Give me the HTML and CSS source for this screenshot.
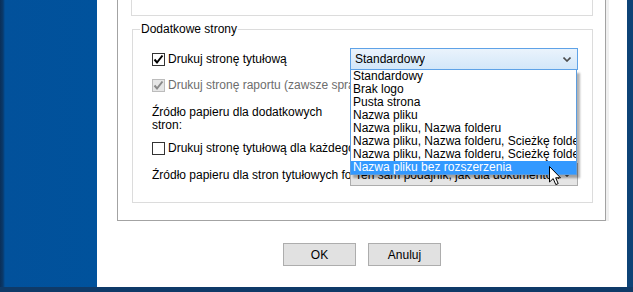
FILE: index.html
```html
<!DOCTYPE html>
<html lang="pl">
<head>
<meta charset="utf-8">
<title>Dodatkowe strony</title>
<link rel="stylesheet" href="styles.css">
</head>
<body>
<div class="screen">
  <div class="main">
    <div class="backdrop"></div>
    <div class="dialog">
      <div class="panel">
        <div class="upper-box"></div>
        <div class="groupbox">
          <div class="legend">Dodatkowe strony</div>
          <div class="row row1">
            <div class="cell">
              <span class="check checked"><svg viewBox="0 0 13 13" width="13" height="13"><path d="M2.5 6.5 L5 9.5 L10.5 2.5" fill="none" stroke="#000" stroke-width="2"/></svg></span>
              <span class="label">Drukuj stronę tytułową</span>
            </div>
            <div class="combo-wrap">
              <div class="combo combo-active">
                <span class="combo-text">Standardowy</span>
                <svg class="chev" viewBox="0 0 8 5" width="8" height="5"><path d="M0.5 0.5 L4 4 L7.5 0.5" fill="none" stroke="#4d4d4d" stroke-width="1.6"/></svg>
              </div>
              <ul class="dropdown">
                <li>Standardowy</li>
                <li>Brak logo</li>
                <li>Pusta strona</li>
                <li>Nazwa pliku</li>
                <li>Nazwa pliku, Nazwa folderu</li>
                <li>Nazwa pliku, Nazwa folderu, Ścieżkę folderu</li>
                <li>Nazwa pliku, Nazwa folderu, Ścieżkę folderu</li>
                <li class="selected">Nazwa pliku bez rozszerzenia</li>
              </ul>
            </div>
          </div>
          <div class="row row2">
            <div class="cell wide">
              <span class="check disabled"><svg viewBox="0 0 13 13" width="13" height="13"><path d="M2.5 6.5 L5 9.5 L10.5 2.5" fill="none" stroke="#8a8a8a" stroke-width="2"/></svg></span>
              <span class="label muted">Drukuj stronę raportu (zawsze sprawdzaj ustawienia)</span>
            </div>
          </div>
          <div class="row row3">
            <div class="cell text-block">Źródło papieru dla dodatkowych<br>stron:</div>
          </div>
          <div class="row row4">
            <div class="cell wide">
              <span class="check"></span>
              <span class="label">Drukuj stronę tytułową dla każdego dokumentu</span>
            </div>
          </div>
          <div class="row row5">
            <div class="cell clip"><span class="label">Źródło papieru dla stron tytułowych folderu</span></div>
            <div class="combo combo-plain">
              <span class="combo-text">Ten sam podajnik, jak dla dokumentów</span>
              <svg class="chev" viewBox="0 0 8 5" width="8" height="5"><path d="M0.5 0.5 L4 4 L7.5 0.5" fill="none" stroke="#4d4d4d" stroke-width="1.6"/></svg>
            </div>
          </div>
        </div>
      </div>
      <div class="buttons">
        <button class="btn">OK</button>
        <button class="btn">Anuluj</button>
      </div>
    </div>
    <div class="right-edge"></div>
  </div>
  <div class="bottom-edge"></div>
  <svg class="cursor" viewBox="0 0 13 20" width="13" height="20"><path d="M0.5 0.5 L0.5 16 L4.2 12.6 L6.8 18.6 L9.2 17.6 L6.7 11.8 L11.5 11.8 Z" fill="#fff" stroke="#000" stroke-width="1" stroke-linejoin="miter"/></svg>
</div>
</body>
</html>
```

FILE: styles.css
```css
* { box-sizing: border-box; }
html, body { margin: 0; padding: 0; }
body {
  width: 633px;
  height: 292px;
  overflow: hidden;
  font-family: "Liberation Sans", Arial, sans-serif;
  font-size: 12px;
  color: #000;
  background: #fff;
}
.screen {
  position: relative;
  display: flex;
  flex-direction: column;
  width: 633px;
  height: 292px;
  overflow: hidden;
}
.main {
  display: flex;
  height: 287px;
}
.backdrop {
  width: 97px;
  flex: none;
  background: linear-gradient(90deg, #0b2f57 0px, #0a3a6c 3px, #02519b 5px, #00529c 100%);
}
.dialog {
  width: 530px;
  flex: none;
  background: #fff;
  padding-left: 20px;
  display: flex;
  flex-direction: column;
}
.right-edge {
  flex: 1;
  background: #0d4377;
}
.bottom-edge {
  height: 5px;
  background: #0f3a68;
}
.panel {
  margin-top: -20px;
  width: 489px;
  border: 1px solid #a3a3a3;
  box-shadow: 3px 0 0 #f0f0f0;
  padding: 0 12px 17px 13px;
}
.upper-box {
  height: 35px;
  width: 462px;
  border: 1px solid #dcdcdc;
  border-top: none;
}
.groupbox {
  margin-top: 13px;
  margin-left: 1px;
  width: 461px;
  height: 174px;
  border: 1px solid #dcdcdc;
  padding-left: 19px;
}
.legend {
  margin-top: -8px;
  margin-left: -12px;
  width: fit-content;
  background: #fff;
  padding: 0 1px;
  line-height: 15px;
}
.row {
  display: grid;
  grid-template-columns: 198px 228px;
  align-items: center;
}
.row1 { margin-top: 11px; height: 22px; }
.row2 { margin-top: 8px; height: 14px; }
.row3 { margin-top: 14px; height: 26px; }
.row4 { margin-top: 9px; height: 14px; }
.row5 { margin-top: 8px; height: 23px; }
.cell {
  display: flex;
  align-items: center;
  white-space: nowrap;
  min-width: 0;
}
.cell.wide { grid-column: 1 / 3; }
.cell.clip { overflow: hidden; }
.text-block {
  display: block;
  line-height: 13px;
  white-space: nowrap;
}
.label { line-height: 14px; }
.muted { color: #6d6d6d; }
.check {
  width: 13px;
  height: 13px;
  flex: none;
  border: 1px solid #333;
  background: #fff;
  margin-right: 3px;
  display: flex;
  align-items: center;
  justify-content: center;
}
.check svg { display: block; margin: -1px; }
.check.disabled {
  border-color: #bcbcbc;
  background: #e6e6e6;
}
.combo-wrap { position: relative; }
.combo {
  height: 22px;
  display: flex;
  align-items: center;
  justify-content: space-between;
  padding: 0 6px 0 4px;
  white-space: nowrap;
  overflow: hidden;
}
.combo-active {
  border: 1px solid #5ea2e7;
  background: linear-gradient(#eaf3fc, #d3e7f9);
}
.combo-plain {
  height: 23px;
  border: 1px solid #adadad;
  background: #e5e5e5;
}
.combo-text { overflow: hidden; }
.chev { flex: none; margin-left: 4px; }
.dropdown {
  position: absolute;
  left: 0;
  top: 22px;
  width: 227px;
  margin: 0;
  padding: 0;
  list-style: none;
  background: #fff;
  border: 1px solid #5b9de0;
  border-top: none;
  box-shadow: 3px 3px 2px rgba(0, 0, 0, 0.3);
  z-index: 2;
}
.dropdown li {
  height: 13px;
  line-height: 13px;
  padding-left: 2px;
  white-space: nowrap;
  overflow: hidden;
}
.dropdown li.selected {
  background: #3399ff;
  color: #fff;
}
.buttons {
  margin-top: 22px;
  padding-left: 166px;
  display: flex;
  gap: 12px;
}
.btn {
  width: 73px;
  height: 23px;
  border: 1px solid #adadad;
  background: #e1e1e1;
  font-family: inherit;
  font-size: 12px;
  color: #000;
  padding: 0;
}
.cursor {
  position: absolute;
  left: 549px;
  top: 166px;
  z-index: 5;
}
```
